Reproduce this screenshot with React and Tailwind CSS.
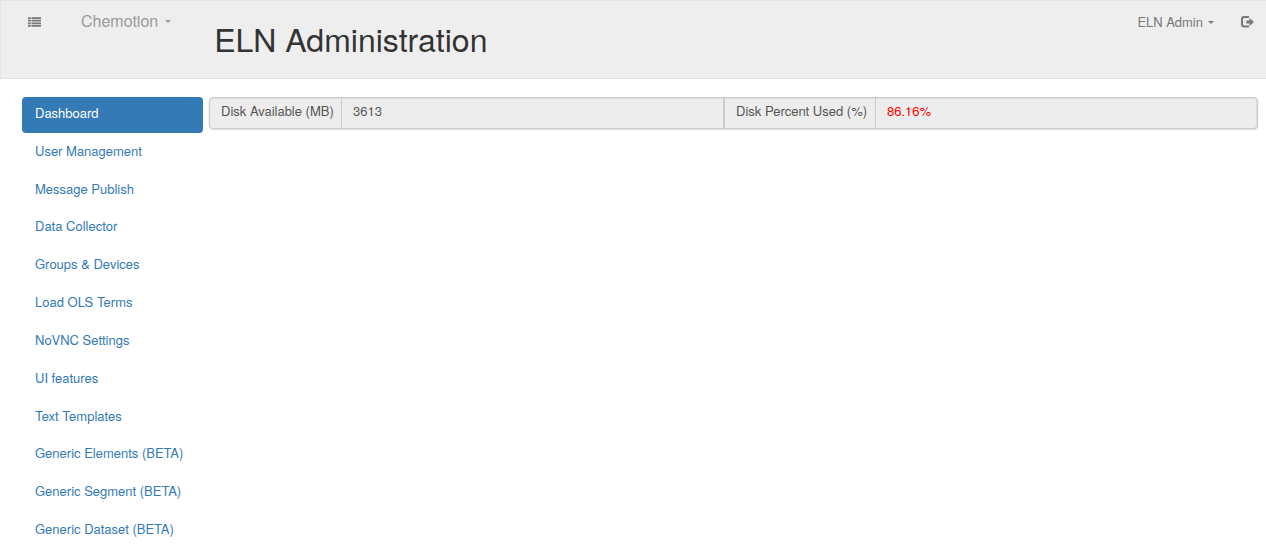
import React from "react";

const links = [
  "Dashboard",
  "User Management",
  "Message Publish",
  "Data Collector",
  "Groups & Devices",
  "Load OLS Terms",
  "NoVNC Settings",
  "UI features",
  "Text Templates",
  "Generic Elements (BETA)",
  "Generic Segment (BETA)",
  "Generic Dataset (BETA)",
];

function ListIcon() {
  return (
    <svg viewBox="0 0 13 10" className="h-[10px] w-[13px] fill-current" aria-hidden="true">
      <path d="M0 .2h2.8v1.7H0zM3.5 .2H13v1.7H3.5zM0 2.8h2.8v1.8H0zM3.5 2.8H13v1.8H3.5zM0 5.4h2.8v1.8H0zM3.5 5.4H13v1.8H3.5zM0 8h2.8v1.8H0zM3.5 8H13v1.8H3.5z" />
    </svg>
  );
}

function LogoutIcon() {
  return (
    <svg viewBox="0 0 13 12" className="h-[12px] w-[13px] fill-current" aria-hidden="true">
      <path d="M3 0h5v2H3.2Q2 2 2 3.2v5.1q0 1.200 1.200 1.200H8v2H3Q0 11.500 0 8.500V3Q0 0 3 0zM8.500 2l4.500 4-4.500 4V7.500H5.300V4.500h3.200z" />
    </svg>
  );
}

function Caret() {
  return <span className="inline-block h-0 w-0 border-x-[3px] border-t-[3px] border-x-transparent border-t-current" />;
}

export default function App() {
  return (
    <div className="min-h-screen bg-white font-['Nimbus_Sans','TeX_Gyre_Heros','Liberation_Sans',Arial,sans-serif] text-[13px] leading-[18px] text-[#555]">
      <header className="flex h-[79px] items-start border border-r-0 border-[#e3e3e3] bg-[#eee] text-[#777]">
        <button type="button" aria-label="Toggle menu" className="ml-[27px] mt-4"><ListIcon /></button>
        <button type="button" className="ml-10 mt-[11px] flex items-center gap-[7px] text-base leading-[18px] text-[#999]">
          Chemotion <Caret />
        </button>
        <h1 className="ml-[43px] mt-[17px] text-[32px] leading-10 text-[#333]">ELN Administration</h1>
        <button type="button" className="ml-auto mt-3 flex items-center gap-[5px]">ELN Admin <Caret /></button>
        <a href="#logout" aria-label="Log out" className="ml-[27px] mr-3 mt-[15px]"><LogoutIcon /></a>
      </header>
      <div className="flex items-start gap-[6px] pl-[22px] pr-2 pt-[18px]">
        <nav className="grid h-[452px] w-[181px] shrink-0 auto-rows-fr gap-[2px]">
          {links.map((name, i) => (
            <a key={name} href="#" className={i === 0 ? "rounded-[4px] bg-[#337ab7] px-[13px] py-[7px] text-white" : "px-[13px] py-[7px] text-[#337ab7]"}>{name}</a>
          ))}
        </nav>
        <main className="min-w-0 flex-1">
          <dl className="flex h-8 whitespace-nowrap rounded-[4px] border border-[#ccc] bg-[#ededed] shadow-[0_1px_2px_rgba(0,0,0,0.15),inset_0_1px_0_#ddd,inset_-1px_0_0_#ddd]">
            <dt className="w-[132px] border-r border-[#ccc] pl-[11px] pt-1">Disk Available (MB)</dt>
            <dd className="flex-1 border-r border-[#ccc] pl-[11px] pt-1">3613</dd>
            <dt className="w-[152px] border-x border-[#ccc] pl-[11px] pt-1">Disk Percent Used (%)</dt>
            <dd className="flex-1 pl-[11px] pt-1 text-[#f00]">86.16%</dd>
          </dl>
        </main>
      </div>
    </div>
  );
}
